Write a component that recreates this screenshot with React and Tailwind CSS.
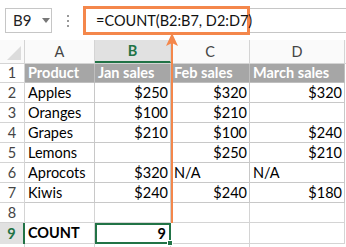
import React from "react";

const cols = [
  "w-[25px]",
  "w-[70px]",
  "w-[76px]",
  "w-[79px]",
  "w-[95px]",
];

const data = [
  ["Apples", "$250", "$320", "$320"],
  ["Oranges", "$100", "$210", ""],
  ["Grapes", "$210", "$100", "$240"],
  ["Lemons", "", "$250", "$210"],
  ["Aprocots", "$320", "N/A", "N/A"],
  ["Kiwis", "$240", "$240", "$180"],
];

function Cell({ w, children, right, cls = "" }) {
  return (
    <div
      className={`${w} h-full shrink-0 border-r border-b border-[#c8c8c8] flex items-center whitespace-nowrap ${right ? "justify-end pr-[2px]" : "pl-[3px]"} ${cls}`}
    >
      {children}
    </div>
  );
}

function RowNum({ n, cls = "" }) {
  return (
    <div
      className={`w-[25px] h-full shrink-0 border-r border-b border-[#d4d4d4] flex items-center justify-center text-[#444] ${cls}`}
    >
      {n}
    </div>
  );
}

export default function App() {
  return (
    <div
      className="w-[346px] h-[247px] bg-white relative overflow-hidden text-[14.5px] text-black"
      style={{ fontFamily: "Lato, 'Open Sans', sans-serif" }}
    >
      {/* formula bar */}
      <div className="h-[40px] flex items-start pt-[8px]">
        <div className="ml-[5px] w-[47px] h-[25px] border border-[#c6c6c6] flex items-center pl-[7px] text-[15px] text-[#222]">
          <span>B9</span>
          <span className="ml-[11px] w-0 h-0 border-l-[4px] border-r-[4px] border-t-[5px] border-l-transparent border-r-transparent border-t-[#777]"></span>
        </div>
        <div className="w-[31px] h-[25px] flex flex-col items-center justify-center gap-[3px]">
          <span className="w-[2px] h-[2px] bg-[#999]"></span>
          <span className="w-[2px] h-[2px] bg-[#999]"></span>
          <span className="w-[2px] h-[2px] bg-[#999]"></span>
        </div>
        <div className="flex-1 h-[25px] border-y border-[#c6c6c6] flex items-start">
          <div className="-mt-[3px] w-[167px] h-[29px] shrink-0 border-[3px] border-[#f4874b] bg-white flex items-center pl-[10px] text-[14.5px] text-[#111] whitespace-nowrap">
            =COUNT(B2:B7, D2:D7)
          </div>
        </div>
      </div>

      {/* column headers */}
      <div className="h-[23px] flex text-[#444]">
        <div className="w-[25px] h-full shrink-0 border-r border-[#d4d4d4] relative bg-[#fafafa]">
          <svg className="absolute right-[3px] bottom-[3px]" width="14" height="14" viewBox="0 0 14 14">
            <polygon points="14,0 14,14 0,14" fill="#dcdcdc" />
          </svg>
        </div>
        <div className="w-[70px] h-full shrink-0 border-r border-[#d4d4d4] flex items-center justify-center bg-[#fafafa]">A</div>
        <div className="w-[76px] h-full shrink-0 border-r border-[#d4d4d4] border-b-2 border-b-[#217346] flex items-center justify-center bg-[#e1e1e1] text-[#217346] font-bold">B</div>
        <div className="w-[79px] h-full shrink-0 border-r border-[#d4d4d4] flex items-center justify-center bg-[#fafafa]">C</div>
        <div className="w-[95px] h-full shrink-0 border-r border-[#d4d4d4] flex items-center justify-center bg-[#fafafa]">D</div>
        <div className="flex-1 bg-[#fafafa]"></div>
      </div>

      {/* header row 1 */}
      <div className="h-[20px] flex border-t border-[#d4d4d4]">
        <RowNum n="1" />
        {["Product", "Jan sales", "Feb sales", "March sales"].map((t, i) => (
          <div
            key={i}
            className={`${cols[i + 1]} h-full shrink-0 bg-[#a6a6a6] text-white font-bold flex items-center pl-[3px] border-r border-b border-[#bfbfbf] whitespace-nowrap`}
          >
            {t}
          </div>
        ))}
      </div>

      {data.map((r, i) => (
        <div key={i} className="h-[20px] flex">
          <RowNum n={i + 2} />
          <Cell w={cols[1]}>{r[0]}</Cell>
          <Cell w={cols[2]} right>{r[1]}</Cell>
          <Cell w={cols[3]} right={r[2] !== "N/A"}>{r[2]}</Cell>
          <Cell w={cols[4]} right={r[3] !== "N/A"}>{r[3]}</Cell>
        </div>
      ))}

      {/* row 8 */}
      <div className="h-[20px] flex">
        <RowNum n="8" />
        <div className="w-[70px] h-full shrink-0 border-r border-b border-[#d4d4d4]"></div>
        <div className="w-[76px] h-full shrink-0 border-r border-b border-[#d4d4d4]"></div>
        <div className="w-[79px] h-full shrink-0 border-r border-b border-[#d4d4d4]"></div>
        <div className="w-[95px] h-full shrink-0 border-r border-b border-[#d4d4d4]"></div>
      </div>

      {/* row 9 */}
      <div className="h-[21px] flex">
        <div className="w-[25px] h-full shrink-0 border-r-2 border-[#217346] bg-[#e1e1e1] flex items-center justify-center text-[#217346] font-bold">9</div>
        <div className="w-[70px] h-full shrink-0 border-r border-b border-[#d4d4d4] flex items-center pl-[3px] font-bold">COUNT</div>
        <div className="w-[76px] h-full shrink-0 border-2 border-[#217346] flex items-center justify-end pr-[3px] font-bold relative">
          9
          <span className="absolute -right-[4px] -bottom-[4px] w-[6px] h-[6px] bg-[#217346] border border-white"></span>
        </div>
        <div className="w-[79px] h-full shrink-0 border-r border-b border-[#d4d4d4]"></div>
        <div className="w-[95px] h-full shrink-0 border-r border-b border-[#d4d4d4]"></div>
      </div>
      <div className="h-[4px] flex">
        <div className="w-[25px] h-full border-r border-[#d4d4d4]"></div>
        <div className="w-[70px] h-full border-r border-[#d4d4d4]"></div>
        <div className="w-[76px] h-full border-r border-[#d4d4d4]"></div>
        <div className="w-[79px] h-full border-r border-[#d4d4d4]"></div>
      </div>

      {/* arrow overlay */}
      <svg className="absolute left-0 top-0 pointer-events-none" width="346" height="247">
        <line x1="172" y1="43" x2="172" y2="223" stroke="#f4874b" strokeWidth="2" />
        <polygon points="172,33 166,46 172,43 178,46" fill="#f4874b" />
      </svg>
    </div>
  );
}
